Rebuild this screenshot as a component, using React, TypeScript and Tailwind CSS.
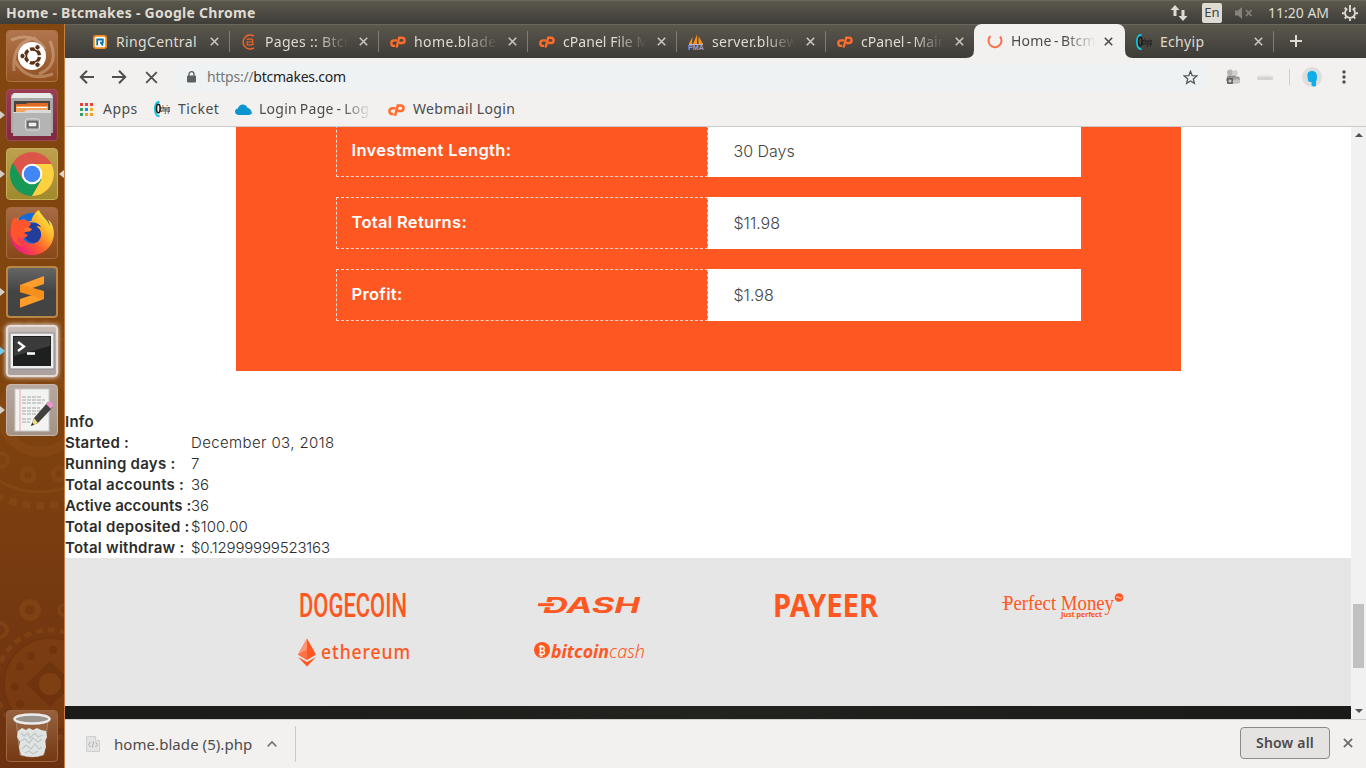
import type { ReactNode } from "react";
import { FaFirefoxBrowser } from "react-icons/fa";

const ORANGE = "#ff5722";

function EchyipIcon() {
  return (
    <svg width="16" height="16" viewBox="0 0 16 16">
      <path d="M5.5 1.200C2.500.2 1 4 1 8s1.500 7.800 4.500 6.800" fill="none" stroke="#10c4dc" strokeWidth="2" />
      <ellipse cx="4.300" cy="7.500" rx="1.800" ry="4.300" fill="none" stroke="#15191c" strokeWidth="1.500" />
      <text x="6" y="10.500" fontSize="8.500" fontWeight="700" fontFamily="Liberation Sans, sans-serif" textLength="10" lengthAdjust="spacingAndGlyphs" fill="#15191c">chyip</text>
    </svg>
  );
}

function CpIcon() {
  return (
    <svg width="17" height="12" viewBox="0 0 17 12" fill="none" stroke="#ff6c2c" strokeWidth="2.500">
      <path d="M7.500 4.300H4.300a2.900 2.900 0 0 0 0 5.800h1.200" />
      <path d="M7 11.800L9.800 1.500h2.900a2.700 2.700 0 0 1 0 5.600h-3" />
    </svg>
  );
}

function RingCentralIcon() {
  return (
    <svg width="14" height="14" viewBox="0 0 14 14">
      <rect width="14" height="14" rx="3" fill="#f28a1e" />
      <rect x="1.800" y="1.800" width="10.400" height="10.400" rx="1.500" fill="#fff" />
      <path d="M4.200 10.500V4.500h5.600v3.200H7M8 8l2 2.500" fill="none" stroke="#0a72a8" strokeWidth="1.800" />
    </svg>
  );
}

function CoinIcon() {
  return (
    <svg width="16" height="16" viewBox="0 0 16 16" fill="none" stroke="#f0652a">
      <path d="M13 2.200A7 7 0 1 0 13 13.800" strokeWidth="1.500" />
      <path d="M5.500 5.200h5q1.200 0 1.200 1.300T10.500 8H7h4q1.200 0 1.200 1.400T11 10.800H6.200V7" strokeWidth="1.200" />
    </svg>
  );
}

function SailIcon() {
  return (
    <svg width="16" height="16" viewBox="0 0 16 16">
      <path d="M4.500 3L4 10H.8zM9 .5V10H5zM10.500 2L15 10h-4.500z" fill="#f7931e" />
      <path d="M1 10.500h14" stroke="#b9b4c9" strokeWidth="1" />
      <text x="0" y="15.800" fontSize="6.500" fontWeight="700" fontFamily="Liberation Sans, sans-serif" textLength="16" lengthAdjust="spacingAndGlyphs" fill="#9d9cd0">PMA</text>
    </svg>
  );
}

function Cross({ className, size = 9, weight = 1.6 }: { className: string; size?: number; weight?: number }) {
  return (
    <svg width={size} height={size} viewBox="0 0 9 9" className={className}>
      <path d="M.8.8l7.400 7.400M8.200.8L.8 8.200" stroke="currentColor" strokeWidth={weight} />
    </svg>
  );
}

type TabProps = { icon: ReactNode; title: string; spacing: string; faded?: boolean; separator?: boolean };

function Tab({ icon, title, spacing, faded, separator }: TabProps) {
  return (
    <div className="relative flex h-[34px] w-[149px] shrink-0 items-center pb-px pl-3 text-[#dfdbd2]">
      <span className="flex w-4 shrink-0 justify-center">{icon}</span>
      <span
        className={`mb-px ml-2 w-[84px] shrink-0 overflow-hidden whitespace-nowrap ${spacing} ${
          faded ? "[mask-image:linear-gradient(to_right,#000_62%,transparent_99%)]" : ""
        }`}
      >
        {title}
      </span>
      <Cross className="ml-[10px] shrink-0 text-[#c9c6bf]" />
      {separator && <span className="absolute right-[-1px] top-[6px] h-[21px] w-px bg-[#7f7c74]" />}
    </div>
  );
}

function TopBar() {
  return (
    <header className="flex h-6 shrink-0 items-center border-t border-[#69675c] bg-linear-to-b from-[#5b584e] to-[#3f3d38] pl-[6px] text-[#dfdbd2]">
      <span className="mb-px text-[14px] font-bold tracking-[0.27px]">Home - Btcmakes - Google Chrome</span>
      <div className="ml-auto flex items-center pr-[7px]">
        <svg width="18" height="18" viewBox="0 0 18 18" fill="currentColor">
          <path d="M5 1l4.500 5H6.500v6h-3V6H.500zM13 17l4.500-5h-3V6h-3v6h-3z" />
        </svg>
        <span className="ml-[14px] flex h-5 w-5 items-center justify-center rounded-[2px] bg-[#dfdbd2] text-[13px] text-[#45433d]">En</span>
        <svg width="18" height="14" viewBox="0 0 18 14" className="ml-[13px] text-[#85827a]">
          <path d="M0 4.500h3L7 1v12L3 9.500H0z" fill="currentColor" />
          <path d="M11 4l5.500 6M16.500 4L11 10" stroke="currentColor" strokeWidth="1.800" />
        </svg>
        <span className="mb-px ml-[15px] w-[61px] whitespace-nowrap text-[14px] tracking-[0px]">11:20 AM</span>
        <svg width="18" height="18" viewBox="0 0 18 18" className="ml-3" fill="none" stroke="currentColor">
          <path d="M6.300 4.700a5 5 0 1 0 5.400 0" strokeWidth="1.800" />
          <path d="M9 1v7M3.700 3.700l1.800 1.800M14.300 3.700l-1.800 1.800M1 9.300h2.500M14.500 9.300H17M3.700 14.500l1.800-1.800M14.300 14.500l-1.800-1.800M9 14.500V17" strokeWidth="1.900" />
        </svg>
      </div>
    </header>
  );
}

function Tile({ className, marker, children }: { className: string; marker?: string; children: ReactNode }) {
  return (
    <div className="relative flex h-[52px] w-full shrink-0 justify-center pr-[1px]">
      {marker && (
        <svg width="5" height="8" viewBox="0 0 5 8" className={`absolute left-0 top-[22px] ${marker}`}>
          <path d="M0 0l5 4-5 4z" fill="currentColor" />
        </svg>
      )}
      <div className={`flex h-[52px] w-[52px] items-center justify-center rounded-[4px] border ${className}`}>{children}</div>
    </div>
  );
}

function Launcher() {
  return (
    <aside className="relative flex w-[65px] shrink-0 flex-col justify-between overflow-hidden border-r border-[#c87d45] bg-linear-to-b from-[#824710] via-[#80440f] to-[#6c3110] pb-[6px] pt-[6px]">
      <svg width="64" height="744" viewBox="0 0 64 744" className="absolute left-0 top-0" fill="none" stroke="#93541d" strokeOpacity=".35">
        <circle cx="40" cy="390" r="38" strokeWidth="10" />
        <circle cx="40" cy="390" r="78" strokeWidth="3" />
        <circle cx="40" cy="390" r="92" strokeWidth="7" strokeDasharray="8 6" />
        <circle cx="28" cy="451" r="6" strokeWidth="5" />
        <circle cx="59" cy="450" r="6" strokeWidth="5" />
        <circle cx="1" cy="436" r="7" strokeWidth="4" />
        <circle cx="30" cy="586" r="8" strokeWidth="6" />
        <circle cx="64" cy="586" r="5" strokeWidth="4" />
        <circle cx="0" cy="606" r="7" strokeWidth="4" />
        <circle cx="50" cy="660" r="54" strokeWidth="5" strokeDasharray="7 5" />
        <circle cx="50" cy="660" r="46" fill="#8a4815" fillOpacity=".35" stroke="#672f0c" strokeWidth="2" />
        <g stroke="none" fill="#672f0c" fillOpacity=".55">
          <circle cx="31" cy="632" r="4" />
          <circle cx="53" cy="626" r="4" />
          <circle cx="20" cy="643" r="4" />
          <circle cx="15" cy="663" r="4" />
          <circle cx="20" cy="680" r="4" />
          <path d="M50 637l24 23-24 23-24-23z" />
        </g>
        <circle cx="50" cy="660" r="11" fill="#7e4013" stroke="none" />
      </svg>
      <div className="relative flex flex-col gap-[7px]">
        <Tile className="border-[#ad7142] bg-linear-to-b from-[#b0764e] to-[#93501f]">
          <svg width="50" height="50" viewBox="0 0 50 50">
            <path d="M7 40Q5 10 29 7M43 10q10 25-11 33M4 9q22-9 34 9M46 43q-26 9-38-13" fill="none" stroke="#f2d6bf" strokeOpacity=".35" strokeWidth="3" />
            <circle cx="25" cy="25" r="14" fill="#fff" />
            <circle cx="25.500" cy="25" r="7" fill="none" stroke="#5b3217" strokeWidth="3.400" strokeDasharray="12.600 2.060" strokeDashoffset="-1" />
            <g fill="#5b3217" stroke="#fff" strokeWidth="1">
              <circle cx="15.500" cy="25" r="2.700" />
              <circle cx="30.500" cy="16.300" r="2.700" />
              <circle cx="30.500" cy="33.700" r="2.700" />
            </g>
          </svg>
        </Tile>
        <Tile className="border-[#a1495a] bg-linear-to-b from-[#9a3d50] to-[#7e2b3d]" marker="text-[#d8cdc4]">
          <svg width="50" height="50" viewBox="0 0 50 50">
            <path d="M4 5l3-2h36l3 2v38H4z" fill="#a8a8a8" />
            <path d="M7 3h36l3 5H4z" fill="#e8e8e8" />
            <rect x="7" y="11" width="36" height="12" fill="#4a4340" />
            <path d="M9 22v-8h10l2-1h20v9z" fill="#e06c26" />
            <path d="M9 22v-6h32v6z" fill="#f6a35d" />
            <path d="M10 17.500h30" stroke="#fff" strokeWidth="1" />
            <path d="M6 22h11l3-2h24v26H6z" fill="#b4b4b4" />
            <path d="M6 22h11l3-2h24v3H6z" fill="#d9d9d9" />
            <rect x="18.500" y="29" width="14" height="11" rx="2" fill="#9a9a9a" stroke="#e2e2e2" />
            <rect x="21" y="32" width="9" height="5" fill="#eee" stroke="#333" />
          </svg>
        </Tile>
        <Tile className="border-[#c5b05c] bg-linear-to-b from-[#bda04f] to-[#a08a2c]" marker="text-[#d8cdc4]">
          <svg width="50" height="50" viewBox="0 0 50 50">
            <circle cx="25" cy="25" r="22" fill="#dc5549" />
            <path d="M5.950 14A22 22 0 0 0 25 47L34.500 30.500 25 25 15.500 30.500z" fill="#149a56" />
            <path d="M25 47A22 22 0 0 0 44.500 15H25L34.500 30.500z" fill="#fdd13f" />
            <circle cx="25" cy="25" r="10.300" fill="#fff" />
            <circle cx="25" cy="25" r="8.300" fill="#4285f4" />
          </svg>
        </Tile>
        <Tile className="border-[#a56a3e] bg-linear-to-b from-[#a76c45] to-[#874718]">
          <svg width="50" height="50" viewBox="0 0 50 50">
            <defs>
              <linearGradient id="fox" x1=".9" y1=".1" x2=".1" y2=".9">
                <stop offset="0" stopColor="#fff04a" />
                <stop offset=".3" stopColor="#ffb32b" />
                <stop offset=".6" stopColor="#ff5b2e" />
                <stop offset="1" stopColor="#ec1487" />
              </linearGradient>
            </defs>
            <circle cx="25" cy="24" r="19" fill="#166bd8" />
            <circle cx="27" cy="25" r="10" fill="#223d9b" />
            <FaFirefoxBrowser x="2" y="2" width="46" height="46" size={46} fill="url(#fox)" />
            <path d="M4 18q0-5 4-9l3 4q3-2 8-1l5 4-3 4h-5q-2 5 5 7-4 6-10 1-2 7 6 10-11 0-13-13z" fill="#ff552c" />
          </svg>
        </Tile>
        <Tile className="border-2 border-[#b88746] bg-linear-to-b from-[#666] via-[#444] to-[#434343]" marker="text-[#d8cdc4]">
          <svg width="28" height="34" viewBox="0 0 28 34">
            <path d="M2 10L26 1v8L2 17.300zM2 24l24-8v8L2 32.700z" fill="#ff9d2a" />
            <path d="M2 10v7.300L26 24v-8L14 12.700z" fill="#f78f1c" />
          </svg>
        </Tile>
        <Tile className="border-2 border-[#e5dcd7] bg-linear-to-b from-[#c7bbb6] to-[#aaa09d] shadow-[0_0_5px_#fff]" marker="text-[#76c9ed]">
          <svg width="46" height="40" viewBox="0 0 46 40">
            <rect x="1" y="2" width="44" height="36" rx="1" fill="#eee" stroke="#888" />
            <rect x="4" y="5" width="38" height="30" fill="#1e201f" />
            <path d="M5 6h36v9L5 25z" fill="#555" fillOpacity=".5" />
            <path d="M9 11l6 4.500L9 20M18 22.500h8" stroke="#fff" strokeWidth="2.300" fill="none" />
          </svg>
        </Tile>
        <Tile className="border-[#c9b6a8] bg-linear-to-b from-[#b7a8a0] to-[#a39287]" marker="text-[#d8cdc4]">
          <svg width="50" height="50" viewBox="0 0 50 50">
            <rect x="8" y="4" width="34" height="42" fill="#f3f3f1" stroke="#c9c9c9" />
            <path d="M13 4v42" stroke="#f3a6a6" />
            <path d="M15 12h19M15 15h23M15 18h21M15 23h18M15 26h21M15 29h14M15 34h10M15 37h8" stroke="#a2a7a7" strokeDasharray="4 1" />
            <path d="M24 41l3-8L41 17l5 5-15 16z" fill="#40413f" />
            <path d="M24 41l3-8 4 5z" fill="#e9dc83" />
            <path d="M24 41l1.200-3.200 1.800 1.800z" fill="#222" />
            <path d="M39 19l4-3 4 4-3 4z" fill="#e995c8" />
          </svg>
        </Tile>
      </div>
      <Tile className="border-[#9d6540] bg-linear-to-b from-[#96613d] to-[#743912]">
        <svg width="50" height="50" viewBox="0 0 50 50">
          <path d="M9 9l4 35q12 4 24 0l4-35z" fill="#a87a58" fillOpacity=".35" stroke="#c9b7a9" strokeOpacity=".45" />
          <path d="M11 20l4-3 4 2 3-2 4 2 4-2 4 2 5 1 1 6-2 4 1 6-2 6-1 2q-10 4-22 0l-2-8 1-5-3-5z" fill="#dfe3e1" />
          <path d="M14 22l3 3 4-3 2 5 5-5 3 4 5-2M13 30l5-2 4 4 4-5 5 4 4-3M15 38l4-4 5 4 4-5 4 5 3-2M18 42l4-2 4 3 5-3" stroke="#c0c6c3" fill="none" strokeWidth="1.200" />
          <ellipse cx="25" cy="8" rx="17.500" ry="4.500" fill="#9c948e" stroke="#ececec" strokeWidth="2.500" />
        </svg>
      </Tile>
      <svg width="5" height="8" viewBox="0 0 5 8" className="absolute right-0 top-[146px] text-[#e0d6cf]">
        <path d="M5 0L0 4l5 4z" fill="currentColor" />
      </svg>
    </aside>
  );
}

function TabStrip() {
  return (
    <div className="flex h-[34px] shrink-0 border-t border-[#69675c] bg-linear-to-b from-[#5a574e] to-[#3e3c37] pl-[15px] text-[14px]">
      <Tab icon={<RingCentralIcon />} title="RingCentral" spacing="tracking-[0.35px]" separator />
      <Tab icon={<CoinIcon />} title="Pages :: Btcmakes" spacing="tracking-[0.3px]" faded separator />
      <Tab icon={<CpIcon />} title="home.blade.php" spacing="tracking-[0.4px]" faded separator />
      <Tab icon={<CpIcon />} title="cPanel File Manager" spacing="tracking-[0.05px]" faded separator />
      <Tab icon={<SailIcon />} title="server.bluewin" spacing="tracking-[0.3px]" faded separator />
      <Tab icon={<CpIcon />} title="cPanel - Main" spacing="tracking-[0.05px] [word-spacing:-1.5px]" faded />
      <div className="relative -mt-px flex h-[34px] w-[151px] shrink-0 items-center rounded-t-[8px] bg-[#f2f1f0] pl-[13px] text-[#4c4c4c]">
        <svg width="8" height="8" viewBox="0 0 8 8" className="absolute bottom-0 left-[-8px]">
          <path d="M8 0v8H0q8 0 8-8" fill="#f2f1f0" />
        </svg>
        <svg width="8" height="8" viewBox="0 0 8 8" className="absolute bottom-0 right-[-8px]">
          <path d="M0 0v8h8Q0 8 0 0" fill="#f2f1f0" />
        </svg>
        <svg width="16" height="16" viewBox="0 0 16 16" fill="none" stroke="#f9704b" strokeWidth="2">
          <path d="M3.500 3A6.500 6.500 0 1 0 13 3.500" />
        </svg>
        <span className="mb-px ml-2 w-[86px] overflow-hidden whitespace-nowrap tracking-[0.2px] [mask-image:linear-gradient(to_right,#000_62%,transparent_99%)] [word-spacing:-1.500px]">
          Home - Btcmakes
        </span>
        <Cross className="ml-[7px] text-[#4c4c4c]" />
      </div>
      <div className="-ml-px flex">
        <Tab icon={<EchyipIcon />} title="Echyip" spacing="tracking-[0.3px]" separator />
      </div>
      <svg width="12" height="12" viewBox="0 0 12 12" className="ml-[17px] mt-[10px]">
        <path d="M6 0v12M0 6h12" stroke="#dfdbd2" strokeWidth="2" />
      </svg>
    </div>
  );
}

function Toolbar() {
  return (
    <div className="flex h-[38px] shrink-0 items-center pl-[14px] text-[#4f4f4f]">
      <svg width="16" height="14" viewBox="0 0 16 14" fill="none" stroke="currentColor" strokeWidth="2">
        <path d="M15 7H2M8 .8L1.800 7 8 13.200" />
      </svg>
      <svg width="16" height="14" viewBox="0 0 16 14" fill="none" stroke="currentColor" strokeWidth="2" className="ml-4">
        <path d="M1 7h13M8 .8L14.200 7 8 13.200" />
      </svg>
      <Cross className="ml-[18px]" size={13} weight={1.25} />
      <div className="ml-[16px] flex h-7 w-[1036px] items-center rounded-full bg-[#eef2f3] pl-[13px] pr-[11px]">
        <svg width="9" height="12" viewBox="0 0 9 12">
          <rect y="4.500" width="9" height="7" rx="1" fill="#5c6063" />
          <path d="M2 5V3.200a2.500 2.500 0 0 1 5 0V5" fill="none" stroke="#5c6063" strokeWidth="1.300" />
        </svg>
        <span className="mb-px ml-[11px] text-[14px] tracking-[-0.24px] text-[#777]">
          https://<span className="text-[#222]">btcmakes.com</span>
        </span>
        <svg width="15" height="15" viewBox="0 0 15 15" className="ml-auto mr-[1px]">
          <path d="M7.500 1.300l1.700 4.300 4.600.3-3.500 3 1.100 4.500-3.900-2.500-3.900 2.500 1.100-4.500-3.500-3 4.600-.3z" fill="none" stroke="#53575b" strokeWidth="1.300" />
        </svg>
      </div>
      <svg width="16" height="16" viewBox="0 0 16 16" className="ml-[15px]">
        <circle cx="5" cy="3.500" r="3" fill="#b5b5b5" />
        <circle cx="10" cy="4" r="2.800" fill="#cecece" />
        <path d="M2.500 6.500h8l1.500 4-3 4H3L1 11z" fill="#8c8c8c" />
        <rect x="2" y="9" width="6" height="6" rx="1" fill="#666" />
        <path d="M5 10.500v3M3.500 12h3" stroke="#eee" />
        <ellipse cx="11.500" cy="10" rx="3.500" ry="2.800" fill="#9d9d9d" />
        <ellipse cx="11.500" cy="12.500" rx="3.700" ry="2.200" fill="#c4c4c4" />
      </svg>
      <svg width="16" height="8" viewBox="0 0 16 8" className="ml-[16px]">
        <path d="M1.500 3.500L3 1h10l1.500 2.500z" fill="#eaeaea" />
        <rect y="3.500" width="16" height="3.500" rx="1" fill="#d3d3d3" />
      </svg>
      <span className="ml-4 h-4 w-px bg-[#cfcecd]" />
      <svg width="20" height="20" viewBox="0 0 20 20" className="ml-3">
        <circle cx="10" cy="10" r="10" fill="#dedede" />
        <path d="M5.500 10Q4.500 4 10 4q5 0 5 5.500 0 4-1 5V19q-3 1.500-4.500-1v-3q-3.500 0-3.500-2z" fill="#0eaeea" />
      </svg>
      <svg width="4" height="14" viewBox="0 0 4 14" className="ml-[20px]" fill="#505050">
        <circle cx="2" cy="2" r="1.700" />
        <circle cx="2" cy="7" r="1.700" />
        <circle cx="2" cy="12" r="1.700" />
      </svg>
    </div>
  );
}

function Bookmarks() {
  const dots = ["#ea4335", "#ea4335", "#ea4335", "#34a065", "#1a8ae0", "#f2b01e", "#34a065", "#f2a01e", "#f2a01e"];
  return (
    <div className="flex h-[30px] shrink-0 items-start pl-[15px] pt-[2px] text-[14px] text-[#4c4c4c]">
      <div className="mt-[5px] grid shrink-0 grid-cols-3 gap-[2px]">
        {dots.map((c, i) => (
          <span key={i} className="h-[3px] w-[3px]" style={{ backgroundColor: c }} />
        ))}
      </div>
      <span className="ml-[10px] w-[51px] tracking-[0.45px]">Apps</span>
      <span className="mt-[3px]"><EchyipIcon /></span>
      <span className="ml-2 w-[56px] tracking-[0.45px]">Ticket</span>
      <svg width="17" height="11" viewBox="0 0 17 11" className="ml-px mt-[6px]">
        <path d="M3.500 11Q0 10.500 0 7.500q0-2.500 2.800-3Q4.500 0 8.500.5q3 .3 4 3.200Q16 4.500 17 9.500L14.500 11z" fill="#0b95cf" />
      </svg>
      <span className="ml-[7px] w-[112px] overflow-hidden whitespace-nowrap tracking-[0.25px] [mask-image:linear-gradient(to_right,#000_75%,transparent_100%)] [word-spacing:-1px]">
        Login Page - Login
      </span>
      <span className="ml-[17px] mt-[6px]"><CpIcon /></span>
      <span className="ml-2 whitespace-nowrap tracking-[0.35px]">Webmail Login</span>
    </div>
  );
}

function ResultRow({ label, value }: { label: string; value: string }) {
  return (
    <div className="flex h-[52px] w-[745px]">
      <div className="w-[372px] border border-dashed border-[#ffd3c6] pl-[15px] text-[16.5px] font-semibold leading-[48px] tracking-[0.33px] text-white">{label}</div>
      <div className="flex-1 bg-white pl-[26px] text-[16px] font-light leading-[52px] tracking-[0px] text-[#444]">{value}</div>
    </div>
  );
}

type InfoRowProps = { label: string; value?: string; spacing?: string; labelSpacing?: string };

function InfoRow({ label, value = "", spacing = "", labelSpacing = "tracking-[0.25px]" }: InfoRowProps) {
  return (
    <div className="flex h-[21px] leading-[21px]">
      <span className={`w-[126px] shrink-0 whitespace-nowrap font-semibold ${labelSpacing}`}>{label}</span>
      <span className={`font-light ${spacing}`}>{value}</span>
    </div>
  );
}

function Logo({ children }: { children: ReactNode }) {
  return (
    <svg width="130" height="46" viewBox="0 0 130 46" fill={ORANGE}>
      {children}
    </svg>
  );
}

function Logos() {
  const sans = "Noto Sans, sans-serif";
  return (
    <div className="grid w-[945px] grid-cols-4 content-start justify-items-center gap-y-px">
      <Logo>
        <text x="10" y="35" fontSize="33" fontWeight="500" fontFamily="Roboto, sans-serif" textLength="108" lengthAdjust="spacingAndGlyphs">DOGECOIN</text>
      </Logo>
      <Logo>
        <text x="18" y="31" fontSize="21" fontStyle="italic" fontWeight="700" fontFamily="Inter, sans-serif" textLength="97" lengthAdjust="spacingAndGlyphs">DASH</text>
        <path d="M13 20.700h17l-1.200 4H12z" stroke="#e6e6e6" strokeWidth="1" />
      </Logo>
      <Logo>
        <text x="12" y="35" fontSize="33" fontWeight="700" fontFamily={sans} textLength="105" lengthAdjust="spacingAndGlyphs">PAYEER</text>
      </Logo>
      <Logo>
        <text x="6" y="28" fontSize="21" fontFamily="Liberation Serif, serif" textLength="111" lengthAdjust="spacingAndGlyphs">Perfect Money</text>
        <path d="M5 20.500h8" stroke={ORANGE} />
        <circle cx="122" cy="15.500" r="4.300" />
        <path d="M119 15.500q1.500-1.500 3 0t3 0" fill="none" stroke="#fff" strokeWidth=".8" />
        <text x="64" y="35" fontSize="7.500" fontWeight="700" fontFamily={sans} textLength="41">Just perfect</text>
      </Logo>
      <Logo>
        <path d="M18 9.500L9 25.500l9 5.500 9-5.500z" />
        <path d="M18 9.500L9 25.500l9-4.500z" fill="#ff9672" />
        <path d="M18 21l-9 4.500 9 5.500z" fill="#ff7247" />
        <path d="M9 28l9 5 9-5-9 9.500z" />
        <text x="32" y="30" fontSize="19" fontWeight="500" fontFamily={sans} letterSpacing="1" textLength="90" lengthAdjust="spacingAndGlyphs">ethereum</text>
      </Logo>
      <Logo>
        <circle cx="17" cy="21" r="8" />
        <text x="13.500" y="25.500" fontSize="12" fontWeight="700" fontFamily="DejaVu Sans, sans-serif" fill="#fff" textLength="7" lengthAdjust="spacingAndGlyphs">₿</text>
        <text x="26" y="29" fontSize="18.500" fontStyle="italic" fontWeight="700" fontFamily={sans} textLength="58" lengthAdjust="spacingAndGlyphs">bitcoin</text>
        <text x="84" y="29" fontSize="18.500" fontStyle="italic" fontWeight="300" fontFamily={sans} textLength="36" lengthAdjust="spacingAndGlyphs">cash</text>
      </Logo>
    </div>
  );
}

function Page() {
  return (
    <main className="flex min-h-0 flex-1 bg-white [font-family:Inter,sans-serif]">
      <div className="flex min-w-0 flex-1 flex-col overflow-hidden">
        <section className="mx-auto flex h-[244px] w-[945px] shrink-0 flex-col items-center justify-end gap-5 overflow-hidden bg-[#ff5722] pb-[50px]">
          <ResultRow label="Investment Length:" value="30 Days" />
          <ResultRow label="Total Returns:" value="$11.98" />
          <ResultRow label="Profit:" value="$1.98" />
        </section>
        <section className="mt-10 shrink-0 text-[15px] text-[#2c2c2c]">
          <InfoRow label="Info" />
          <InfoRow label="Started :" value="December 03, 2018" spacing="tracking-[0.38px]" />
          <InfoRow label="Running days :" value="7" />
          <InfoRow label="Total accounts :" value="36" />
          <InfoRow label="Active accounts :" value="36" labelSpacing="tracking-[0.05px]" />
          <InfoRow label="Total deposited :" value="$100.00" spacing="tracking-[0.15px]" />
          <InfoRow label="Total withdraw :" value="$0.12999999523163" spacing="tracking-[-0.17px]" />
        </section>
        <section className="flex h-[148px] shrink-0 justify-center bg-[#e6e6e6] pt-6">
          <Logos />
        </section>
        <div className="h-[13px] shrink-0 bg-linear-to-r from-[#1b1b19] via-[#22221f] to-[#1a1a18]" />
      </div>
      <div className="flex w-[15px] shrink-0 flex-col items-center bg-[#f1f1f1] py-[6px]">
        <svg width="8" height="4" viewBox="0 0 8 4">
          <path d="M0 4l4-4 4 4z" fill="#505050" />
        </svg>
        <span className="mt-[467px] h-16 w-[11px] bg-[#c1c1c1]" />
        <svg width="8" height="4" viewBox="0 0 8 4" className="mt-auto">
          <path d="M0 0l4 4 4-4z" fill="#505050" />
        </svg>
      </div>
    </main>
  );
}

function DownloadBar() {
  return (
    <footer className="flex h-[49px] shrink-0 items-center border-t border-[#d2d0ce] bg-[#f2f1f0] pl-[21px] pr-3 text-[#4c4c4c]">
      <svg width="14" height="16" viewBox="0 0 14 16">
        <path d="M.5.5h9l4 4v11H.5z" fill="#e3e3e3" stroke="#cfcfcf" />
        <path d="M9.500.5v4h4" fill="#f5f5f5" stroke="#cfcfcf" />
        <path d="M4.500 6L2.500 8.500l2 2.500M9.500 6l2 2.500-2 2.500M7.700 5.500l-1.400 6" fill="none" stroke="#adadad" />
      </svg>
      <span className="ml-[14px] w-[139px] whitespace-nowrap text-[15px] tracking-[0.06px]">home.blade (5).php</span>
      <svg width="10" height="6" viewBox="0 0 10 6" className="ml-[14px]">
        <path d="M.7 5.300L5 1l4.300 4.300" fill="none" stroke="#777" strokeWidth="1.700" />
      </svg>
      <span className="ml-[18px] h-9 w-px bg-[#cbcac8]" />
      <button className="mb-[3px] ml-auto h-8 w-[90px] rounded-[4px] border border-[#8b8a88] bg-[#e4e3e1] text-[14px] font-semibold tracking-[0.2px]">Show all</button>
      <Cross className="mb-[2px] ml-[13px] mr-px text-[#6c6c6c]" size={10} />
    </footer>
  );
}

export default function App() {
  return (
    <div className="flex h-[768px] w-[1366px] flex-col overflow-hidden [font-family:'Noto_Sans',sans-serif]">
      <TopBar />
      <div className="flex min-h-0 flex-1">
        <Launcher />
        <div className="flex min-w-0 flex-1 flex-col">
          <TabStrip />
          <div className="flex h-[69px] shrink-0 flex-col border-b border-[#cdcbc9] bg-[#f2f1f0]">
            <Toolbar />
            <Bookmarks />
          </div>
          <Page />
          <DownloadBar />
        </div>
      </div>
    </div>
  );
}
